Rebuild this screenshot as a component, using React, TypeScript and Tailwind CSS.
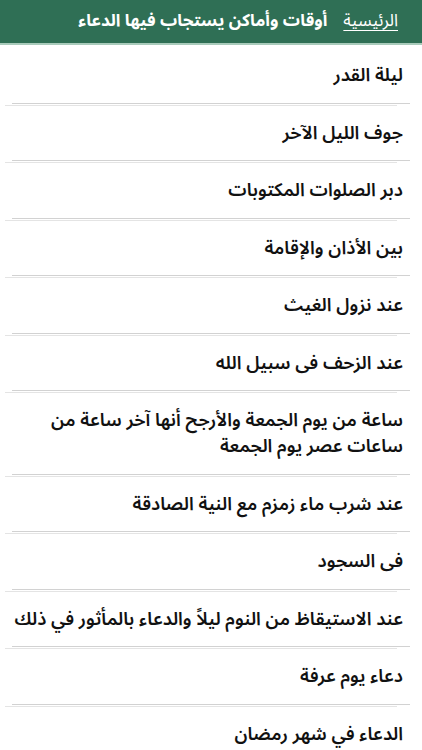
import React from 'react';

const items: string[] = [
  'ليلة القدر',
  'جوف الليل الآخر',
  'دبر الصلوات المكتوبات',
  'بين الأذان والإقامة',
  'عند نزول الغيث',
  'عند الزحف فى سبيل الله',
  'ساعة من يوم الجمعة والأرجح أنها آخر ساعة من ساعات عصر يوم الجمعة',
  'عند شرب ماء زمزم مع النية الصادقة',
  'فى السجود',
  'عند الاستيقاظ من النوم ليلاً والدعاء بالمأثور في ذلك',
  'دعاء يوم عرفة',
  'الدعاء في شهر رمضان',
];

function Divider() {
  return (
    <div className="flex flex-col" dir="ltr">
      <div className="ml-[12px] mr-[12px] h-px bg-[#d2d2d2]" />
      <div className="ml-[5px] mr-[25px] mt-px h-px bg-[#e4e4e4]" />
    </div>
  );
}

export default function App() {
  return (
    <div
      dir="rtl"
      className="min-h-screen bg-white"
      style={{ fontFamily: '"Noto Sans Arabic", "Noto Sans", "DejaVu Sans", sans-serif' }}
    >
      <header className="flex h-[45px] items-center gap-4 border-b-2 border-[#a9cbbb] bg-[#2f6f55] pr-6 text-[17px] text-white">
        <a className="underline underline-offset-4">الرئيسية</a>
        <h1 className="font-bold">أوقات وأماكن يستجاب فيها الدعاء</h1>
      </header>
      <ul className="pt-[3px]">
        {items.map((item, i) => (
          <li key={i}>
            <div className="py-[14.25px] pl-3 pr-[19px] text-[18.3px] font-semibold leading-[26px] text-[#111]">
              {item}
            </div>
            {i < items.length - 1 && <Divider />}
          </li>
        ))}
      </ul>
    </div>
  );
}
